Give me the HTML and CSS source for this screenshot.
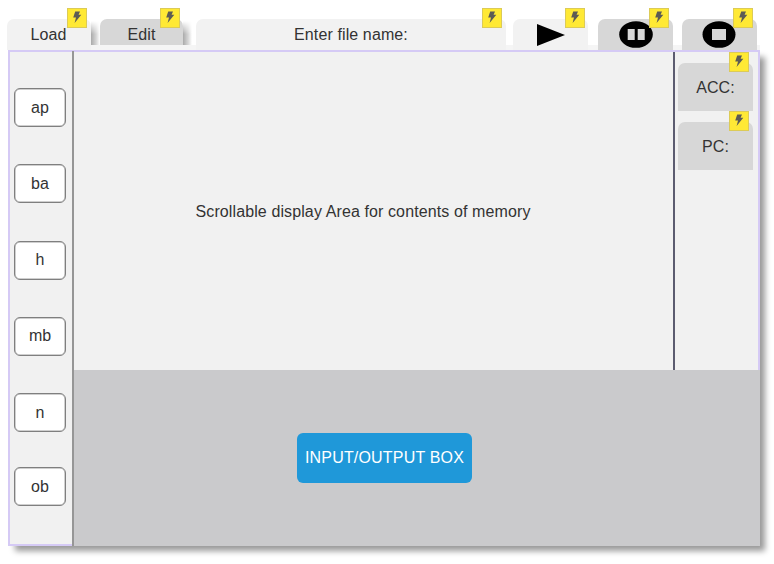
FILE: index.html
```html
<!DOCTYPE html>
<html lang="en">
<head>
<meta charset="utf-8">
<title>Simulator</title>
<link rel="stylesheet" href="styles.css">
</head>
<body>
<svg class="defs" width="0" height="0"><symbol id="bolt" viewBox="0 0 18 18"><path d="M7.2 2.5H12L10.6 5.8H13.3L6.6 14L8 8.6H5.2Z"/></symbol></svg>
<div class="app">
  <nav class="tabs">
    <div class="tab load"><span>Load</span><i class="badge"><svg><use href="#bolt"/></svg></i></div>
    <div class="tab dark edit"><span>Edit</span><i class="badge"><svg><use href="#bolt"/></svg></i></div>
    <div class="tab file"><span>Enter file name:</span><i class="badge"><svg><use href="#bolt"/></svg></i></div>
    <div class="tab play"><svg class="arrow" width="28" height="22" viewBox="0 0 28 22"><path d="M0 0L28 11L0 22Z"/></svg><i class="badge"><svg><use href="#bolt"/></svg></i></div>
    <div class="tab dark pause"><svg width="34" height="27" viewBox="0 0 34 27"><ellipse cx="17" cy="13.5" rx="16.8" ry="13.3"/><path fill="#d7d7d7" d="M8.7 8h7v11h-7zM18.7 8h7v11h-7z"/></svg><i class="badge"><svg><use href="#bolt"/></svg></i></div>
    <div class="tab dark stop"><svg width="34" height="27" viewBox="0 0 34 27"><ellipse cx="17" cy="13.5" rx="16.5" ry="13.3"/><path fill="#d7d7d7" d="M10 8h14v11H10z"/></svg><i class="badge"><svg><use href="#bolt"/></svg></i></div>
  </nav>
  <main class="frame">
    <aside class="keys">
      <button>ap</button><button>ba</button><button>h</button><button>mb</button><button>n</button><button>ob</button>
    </aside>
    <section class="memory">Scrollable display Area for contents of memory</section>
    <aside class="registers">
      <div class="register">ACC:<i class="badge"><svg><use href="#bolt"/></svg></i></div>
      <div class="register">PC:<i class="badge"><svg><use href="#bolt"/></svg></i></div>
    </aside>
    <section class="io"><div class="io-box">INPUT/OUTPUT BOX</div></section>
  </main>
</div>
</body>
</html>
```
FILE: styles.css
```css
* { box-sizing: border-box; }
body {
  margin: 0;
  background: #fff;
  color: #333;
  font: 16px/18px "Liberation Sans", Arial, sans-serif;
  letter-spacing: .11px;
}
.defs { display: block; }
.app { width: 774px; height: 564px; overflow: hidden; }
.tabs {
  display: flex;
  align-items: flex-start;
  height: 50px;
  padding: 19px 0 0 7px;
  background: linear-gradient(#f5f5f5, #f5f5f5) 8px 45px / 752px 5px no-repeat;
}
.tab {
  position: relative;
  display: flex;
  justify-content: center;
  align-items: center;
  height: 31px;
  background: #f2f2f2;
  border-radius: 7px 7px 0 0;
}
.tab svg { display: block; }
.dark { background: #d7d7d7; }
.load { width: 84px; margin-right: 9px; padding-right: 1px; }
.edit { width: 83px; height: 26px; margin-right: 13px; padding-top: 5px; }
.load::after, .edit::after {
  content: "";
  position: absolute;
  left: 100%;
  top: 2px;
  width: 9px;
  height: 24px;
  background: linear-gradient(90deg, #aaa, #d8d8d8 60%, #fff);
  -webkit-mask-image: linear-gradient(transparent, #000 55%);
  mask-image: linear-gradient(transparent, #000 55%);
}
.file { width: 310px; margin-right: 7px; }
.play { width: 75px; margin-right: 10px; }
.pause { width: 75px; margin-right: 9px; }
.stop { width: 75px; }
.pause > svg:first-child { margin-left: 1px; }
.stop > svg:first-child { margin-left: -1px; }
.arrow { margin-left: 1px; }
.badge {
  position: absolute;
  z-index: 1;
  top: -11px;
  right: 4px;
  width: 20px;
  height: 20px;
  background: #ffe935;
  border: 1px solid #dccb57;
}
.badge svg { display: block; width: 18px; height: 18px; fill: #5c5b55; }
.play .badge, .edit .badge { right: 3px; }
.frame {
  display: grid;
  grid-template: 318px 174px / 64px 601px 83px;
  width: 752px;
  height: 496px;
  margin-left: 8px;
  border: 2px solid #d5caf5;
  background: #f1f1f1;
  box-shadow: 6px 6px 6px -1px rgba(0, 0, 0, .4);
}
.keys {
  grid-row: 1 / 3;
  padding: 37px 0 0 4px;
  margin: -1px 0 -2px;
  border-right: 2px solid #969696;
}
button {
  display: block;
  width: 52px;
  height: 39px;
  margin: 0 0 37.25px;
  padding: 0;
  border: 1px solid #7f7f7f;
  box-shadow: inset 0 0 0 .5px #a0a0a0;
  border-radius: 6px;
  background: #fff;
  color: #333;
  font: inherit;
}
button:nth-child(5) { margin-bottom: 35px; }
.memory {
  display: flex;
  justify-content: center;
  align-items: center;
  padding: 2px 21px 0 0;
  border-right: 2px solid #5c5c70;
}
.registers { padding: 11px 5px 0 3px; }
.register {
  position: relative;
  display: flex;
  justify-content: center;
  align-items: center;
  height: 48px;
  padding-top: 2px;
  margin-bottom: 11px;
  background: #d7d7d7;
  border-radius: 7px 7px 0 0;
}
.io {
  grid-column: 2 / 4;
  margin: 0 -2px -2px 0;
  padding: 63px 0 0 223px;
  background: #cacacc;
}
.io-box {
  width: 175px;
  height: 50px;
  border-radius: 6px;
  background: #1f98d9;
  color: #fff;
  line-height: 50px;
  text-align: center;
  letter-spacing: .18px;
}
```
